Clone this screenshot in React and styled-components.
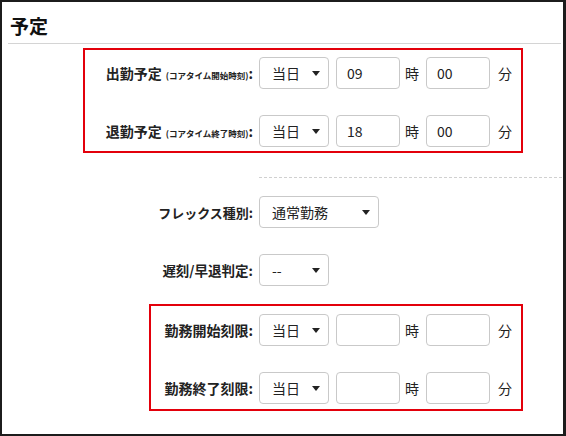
import React from "react";
import styled, { createGlobalStyle } from "styled-components";

const GlobalStyle = createGlobalStyle`
  html, body {
    margin: 0;
    padding: 0;
    background: #ffffff;
  }
  body {
    font-family: "Noto Sans CJK JP", "Noto Sans", "Liberation Sans", sans-serif;
    color: #222;
  }
`;

const Frame = styled.div`
  box-sizing: border-box;
  width: 566px;
  height: 436px;
  border: 2px solid #1c1c1c;
  border-right-width: 3px;
  background: #fff;
  overflow: hidden;
`;

const Header = styled.div`
  margin: 0 2px 0 6px;
  height: 41px;
  border-bottom: 1px solid #d4d4d4;
  display: flex;
  align-items: center;
`;

const Title = styled.h2`
  margin: 0 0 0 2px;
  font-size: 19px;
  font-weight: 700;
  color: #111;
  line-height: 1;
  padding-top: 5px;
`;

const Form = styled.div`
  display: flex;
  flex-direction: column;
  align-items: flex-start;
  padding-top: 4px;
`;

const Group = styled.div`
  box-sizing: border-box;
  margin-left: ${(p) => p.$left}px;
  margin-top: ${(p) => p.$top || 0}px;
  border: 2px solid #e3000b;
  padding: ${(p) => p.$pad};
  display: flex;
  flex-direction: column;
  gap: 26px;
`;

const Row = styled.div`
  display: flex;
  align-items: center;
  height: 32px;
  margin-top: ${(p) => p.$top || 0}px;
`;

const Label = styled.div`
  box-sizing: border-box;
  width: ${(p) => p.$width}px;
  text-align: right;
  padding-right: 6px;
  font-size: ${(p) => p.$size || 14}px;
  font-weight: 700;
  color: #222;
  white-space: nowrap;
`;

const Note = styled.span`
  font-size: 8.5px;
  font-weight: 700;
  margin-left: 4px;
`;

const Select = styled.div`
  box-sizing: border-box;
  width: ${(p) => p.$width}px;
  height: 32px;
  border: 1px solid #c9c9c9;
  border-radius: 4px;
  background: #fff;
  display: flex;
  align-items: center;
  justify-content: space-between;
  padding: 0 8px 0 12px;
  font-size: 14px;
  color: #222;
`;

const Caret = styled.span`
  width: 0;
  height: 0;
  border-left: 4px solid transparent;
  border-right: 4px solid transparent;
  border-top: 5px solid #222;
`;

const Input = styled.div`
  box-sizing: border-box;
  width: 64px;
  height: 32px;
  margin-left: 7px;
  border: 1px solid #c9c9c9;
  border-radius: 4px;
  background: #fff;
  display: flex;
  align-items: center;
  padding-left: 10px;
  font-size: 14px;
  color: #222;
`;

const Unit = styled.span`
  font-size: 14px;
  margin-left: ${(p) => p.$gap}px;
  color: #222;
`;

const Dashed = styled.div`
  width: 303px;
  margin-left: 257px;
  margin-top: 24px;
  border-top: 1px dashed #d0d0d0;
`;

function TimeControls({ hour, minute }) {
  return (
    <>
      <Select $width={70}>
        当日
        <Caret />
      </Select>
      <Input>{hour}</Input>
      <Unit $gap={5}>時</Unit>
      <Input>{minute}</Input>
      <Unit $gap={8}>分</Unit>
    </>
  );
}

export default function App() {
  return (
    <>
      <GlobalStyle />
      <Frame>
        <Header>
          <Title>予定</Title>
        </Header>
        <Form>
          <Group $left={81} $pad="7px 9px 4px 8px">
            <Row>
              <Label $width={166}>
                出勤予定<Note>(コアタイム開始時刻)</Note>:
              </Label>
              <TimeControls hour="09" minute="00" />
            </Row>
            <Row>
              <Label $width={166}>
                退勤予定<Note>(コアタイム終了時刻)</Note>:
              </Label>
              <TimeControls hour="18" minute="00" />
            </Row>
          </Group>
          <Dashed />
          <Row $top={18}>
            <Label $width={257} $size={13}>
              フレックス種別:
            </Label>
            <Select $width={120}>
              通常勤務
              <Caret />
            </Select>
          </Row>
          <Row $top={26}>
            <Label $width={257} $size={13.5}>
              遅刻/早退判定:
            </Label>
            <Select $width={70}>
              --
              <Caret />
            </Select>
          </Row>
          <Group $left={147} $pad="8px 9px 5px 9px" $top={18}>
            <Row>
              <Label $width={99}>勤務開始刻限:</Label>
              <TimeControls hour="" minute="" />
            </Row>
            <Row>
              <Label $width={99}>勤務終了刻限:</Label>
              <TimeControls hour="" minute="" />
            </Row>
          </Group>
        </Form>
      </Frame>
    </>
  );
}
